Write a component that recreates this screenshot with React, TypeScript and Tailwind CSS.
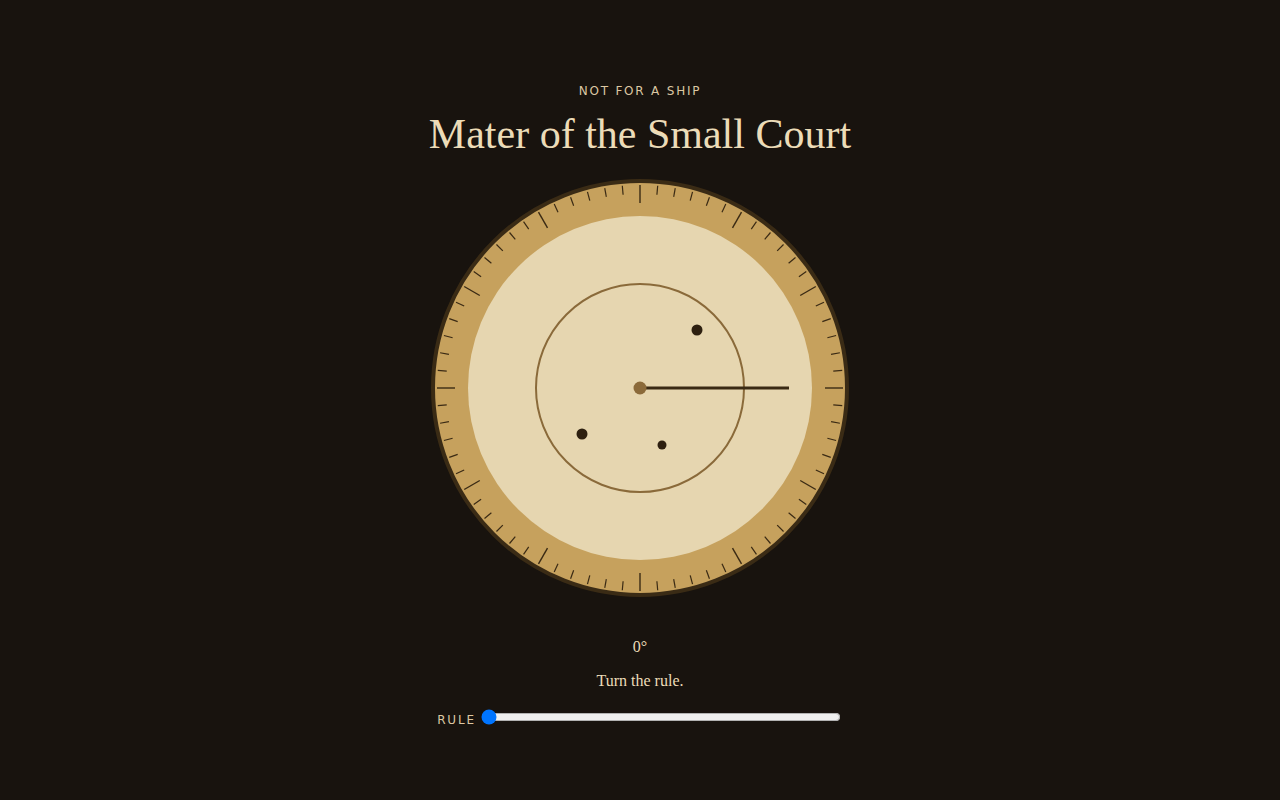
import React, { useState } from "react";

export default function App() {
  const [v, setV] = useState(0);
  const cx = 210;
  const cy = 210;
  const ticks = [];
  for (let i = 0; i < 72; i++) {
    const a = (i * 5 * Math.PI) / 180;
    const major = i % 6 === 0;
    const r1 = 203;
    const r2 = major ? 185 : 194;
    const s = Math.sin(a);
    const c = Math.cos(a);
    ticks.push(
      <line
        key={i}
        x1={cx + r1 * s}
        y1={cy - r1 * c}
        x2={cx + r2 * s}
        y2={cy - r2 * c}
        stroke="#3a2a14"
        strokeWidth={major ? 1.4 : 1.2}
      />
    );
  }
  const ang = (v * Math.PI) / 180;
  const rx = cx + 149 * Math.cos(ang);
  const ry = cy - 149 * Math.sin(ang);
  return (
    <div className="min-h-screen w-full bg-[#18130e] flex flex-col items-center pt-[83px]">
      <div className="font-['DejaVu_Sans',sans-serif] text-[12px] leading-[16px] tracking-[0.15em] text-[#dcc7a2]">
        NOT FOR A SHIP
      </div>
      <h1 className="mt-[10px] font-['Liberation_Serif',serif] text-[42px] leading-[50px] text-[#ecdcb8]">
        Mater of the Small Court
      </h1>
      <svg width="420" height="420" viewBox="0 0 420 420" className="mt-[19px] block">
        <circle cx={cx} cy={cy} r={207} fill="#c6a15d" stroke="#3a2b15" strokeWidth={4} />
        <circle cx={cx} cy={cy} r={172} fill="#e6d6b0" />
        {ticks}
        <circle cx={cx} cy={cy} r={104} fill="none" stroke="#8a6a3a" strokeWidth={2} />
        <circle cx={267} cy={152} r={5.5} fill="#2e2010" />
        <circle cx={152} cy={256} r={5.5} fill="#2e2010" />
        <circle cx={232} cy={267} r={4.5} fill="#2e2010" />
        <line x1={cx} y1={cy} x2={rx} y2={ry} stroke="#3a2a14" strokeWidth={3} />
        <circle cx={cx} cy={cy} r={6.5} fill="#8b6a3a" />
      </svg>
      <div className="mt-[37px] font-['Liberation_Serif',serif] text-[16px] leading-[24px] text-[#ecdcb8]">
        {v}°
      </div>
      <div className="mt-[10px] font-['Liberation_Serif',serif] text-[16px] leading-[24px] text-[#ecdcb8]">
        Turn the rule.
      </div>
      <div className="mt-[13px] flex items-center gap-[5px] pr-[2px]">
        <span className="pt-[6px] font-['DejaVu_Sans',sans-serif] text-[12px] leading-[16px] tracking-[0.15em] text-[#dcc7a2]">
          RULE
        </span>
        <input
          type="range"
          min={0}
          max={360}
          value={v}
          onChange={(e) => setV(Number(e.target.value))}
          className="w-[360px]"
        />
      </div>
    </div>
  );
}
